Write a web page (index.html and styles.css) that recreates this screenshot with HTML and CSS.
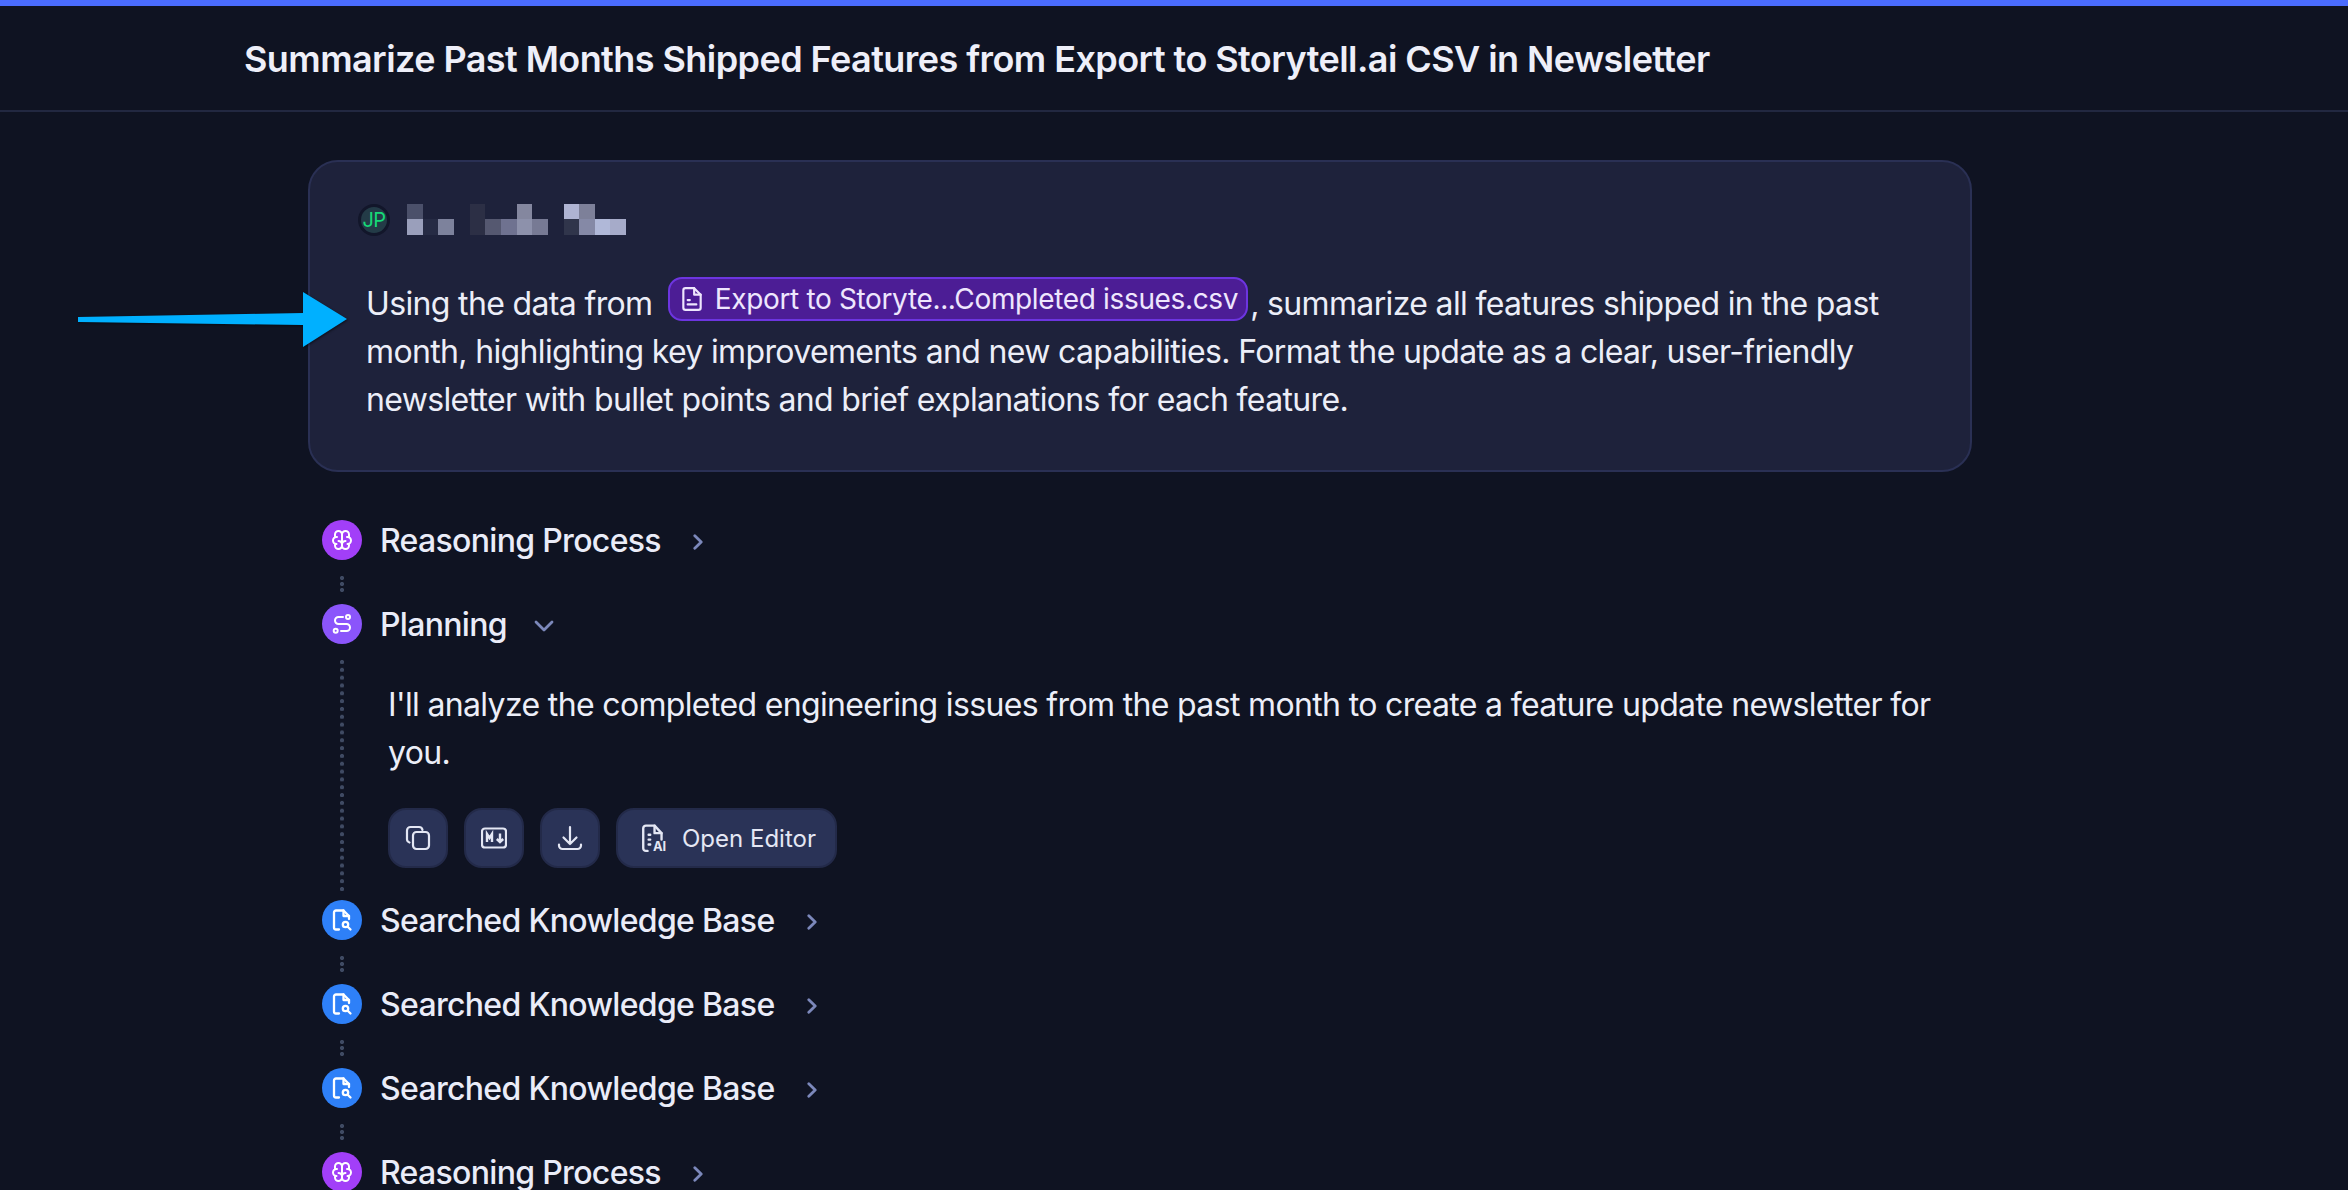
FILE: index.html
```html
<!DOCTYPE html>
<html lang="en">
<head>
<meta charset="utf-8">
<title>Summarize Past Months Shipped Features</title>
<link rel="stylesheet" href="styles.css">
</head>
<body>
<svg width="0" height="0" class="defs">
  <symbol id="i-brain" viewBox="0 0 24 24"><path d="M15.500 13a3.500 3.500 0 0 0-3.500 3.500v1a3.500 3.500 0 0 0 7 0v-1.800M8.500 13a3.500 3.500 0 0 1 3.500 3.500v1a3.500 3.500 0 0 1-7 0v-1.800M17.500 16a3.500 3.500 0 0 0 0-7H17M19 9.300V6.500a3.500 3.500 0 0 0-7 0M6.500 16a3.500 3.500 0 0 1 0-7H7M5 9.300V6.500a3.500 3.500 0 0 1 7 0v10"/></symbol>
  <symbol id="i-route" viewBox="0 0 24 24"><circle cx="5.700" cy="18.700" r="2"/><path d="M13 5H8.500a3.500 3.500 0 0 0 0 7h8a3.500 3.500 0 0 1 0 7H11"/><circle cx="18" cy="5" r="2"/></symbol>
  <symbol id="i-search" viewBox="0 0 24 24"><path d="M9 21.500H6a2 2 0 0 1-2-2V4.500a2 2 0 0 1 2-2h7.500l5.500 5.500v3"/><path d="M13.500 2.500V8H19"/><circle cx="15.500" cy="16.500" r="2.700"/><path d="m17.700 18.700 2.800 2.800"/></symbol>
  <symbol id="i-chev-r" viewBox="0 0 10 16"><path d="m1.800 1.800 6.400 6.200-6.400 6.200"/></symbol>
</svg>

<header class="topbar">
  <h1 class="title">Summarize Past Months Shipped Features from Export to Storytell.ai CSV in Newsletter</h1>
</header>

<main class="thread">
  <section class="prompt">
    <div class="author">
      <span class="avatar">JP</span>
      <svg class="blurname" width="226" height="31" viewBox="0 0 226 31">
        <rect x="0" y="0" width="16" height="15" fill="#4b506a"/><rect x="0" y="15" width="16" height="16" fill="#9a9fbb"/>
        <rect x="16" y="15" width="15" height="16" fill="#262b44"/>
        <rect x="31" y="15" width="16" height="16" fill="#7d829c"/>
        <rect x="63" y="0" width="15" height="31" fill="#2c2f45"/>
        <rect x="78" y="15" width="16" height="16" fill="#555870"/>
        <rect x="94" y="15" width="16" height="16" fill="#6f7290"/>
        <rect x="110" y="0" width="15" height="15" fill="#84879f"/><rect x="110" y="15" width="15" height="16" fill="#8d91ab"/>
        <rect x="125" y="15" width="16" height="16" fill="#777a94"/>
        <rect x="157" y="0" width="15" height="15" fill="#afb4d3"/><rect x="157" y="15" width="15" height="16" fill="#30354b"/>
        <rect x="172" y="0" width="16" height="15" fill="#7d8099"/><rect x="172" y="15" width="16" height="16" fill="#8589a6"/>
        <rect x="188" y="15" width="15" height="16" fill="#b0b8d8"/>
        <rect x="203" y="15" width="16" height="16" fill="#a6abc9"/>
      </svg>
    </div>
    <p class="prompt-text">Using the data from <span class="pill"><svg class="pill-icon" viewBox="0 0 24 24"><path d="M14 2H6a2 2 0 0 0-2 2v16a2 2 0 0 0 2 2h12a2 2 0 0 0 2-2V8z"/><path d="M14 2v6h6M8 13h2M8 17h8"/></svg>Export to Storyte...Completed issues.csv</span>, summarize all features shipped in the past month, highlighting key improvements and new capabilities. Format the update as a clear, user-friendly newsletter with bullet points and brief explanations for each feature.</p>
  </section>

  <section class="steps">
    <div class="step">
      <span class="badge badge-brain"><svg class="badge-icon"><use href="#i-brain"/></svg></span>
      <span class="step-label">Reasoning Process</span>
      <svg class="chev"><use href="#i-chev-r"/></svg>
    </div>
    <div class="link"></div>
    <div class="step">
      <span class="badge badge-plan"><svg class="badge-icon"><use href="#i-route"/></svg></span>
      <span class="step-label">Planning</span>
      <svg class="chev-down" viewBox="0 0 20 12"><path d="m2 2 8 8 8-8"/></svg>
    </div>
    <div class="step-body">
      <div class="rail"></div>
      <div class="step-content">
        <p class="answer">I'll analyze the completed engineering issues from the past month to create a feature update newsletter for you.</p>
        <div class="actions">
          <button class="action action-square"><svg class="action-icon" viewBox="0 0 26 26"><rect x="8" y="7" width="16" height="17" rx="3.500"/><path d="M4.500 17.500A3.500 3.500 0 0 1 2 14.500V5.500A3.500 3.500 0 0 1 5.500 2H14a3.500 3.500 0 0 1 3.500 3"/></svg></button>
          <button class="action action-square"><svg class="action-icon" viewBox="0 0 26 26"><rect x="1" y="3.500" width="24" height="19" rx="3"/><path class="md-glyph" d="M6 17V9l2.500 4L11 9v8M19 8.500V17M15.800 14l3.200 3 3.200-3"/></svg></button>
          <button class="action action-square"><svg class="action-icon" viewBox="0 0 26 26"><path d="M13 2v17M6.500 12.500 13 19l6.500-6.500M2 19.500v1A3.500 3.500 0 0 0 5.500 24h15a3.500 3.500 0 0 0 3.500-3.500v-1"/></svg></button>
          <button class="action action-wide"><svg class="action-icon action-icon-ai" viewBox="0 0 26 26"><path d="M7 25H5.500A2.500 2.500 0 0 1 3 22.500V4A2.500 2.500 0 0 1 5.500 1.500h8l6.500 7v6"/><path d="M13.500 1.500V8.500H20M8 10h1.500M8 14.500h1.500M8 19h1.500"/><text x="12" y="25.500" class="ai-mark">AI</text></svg>Open Editor</button>
        </div>
      </div>
    </div>
    <div class="step">
      <span class="badge badge-search"><svg class="badge-icon badge-icon-search"><use href="#i-search"/></svg></span>
      <span class="step-label">Searched Knowledge Base</span>
      <svg class="chev"><use href="#i-chev-r"/></svg>
    </div>
    <div class="link"></div>
    <div class="step">
      <span class="badge badge-search"><svg class="badge-icon badge-icon-search"><use href="#i-search"/></svg></span>
      <span class="step-label">Searched Knowledge Base</span>
      <svg class="chev"><use href="#i-chev-r"/></svg>
    </div>
    <div class="link"></div>
    <div class="step">
      <span class="badge badge-search"><svg class="badge-icon badge-icon-search"><use href="#i-search"/></svg></span>
      <span class="step-label">Searched Knowledge Base</span>
      <svg class="chev"><use href="#i-chev-r"/></svg>
    </div>
    <div class="link"></div>
    <div class="step">
      <span class="badge badge-brain"><svg class="badge-icon"><use href="#i-brain"/></svg></span>
      <span class="step-label">Reasoning Process</span>
      <svg class="chev"><use href="#i-chev-r"/></svg>
    </div>
  </section>
</main>

<svg class="arrow" width="275" height="66" viewBox="0 0 275 66">
  <path d="M0 31 225 27V6l44 27-44 28V39L0 36z" />
</svg>
</body>
</html>
```

FILE: styles.css
```css
* { box-sizing: border-box; }
html, body { height: 100%; }
body {
  margin: 0;
  height: 1190px;
  overflow: hidden;
  position: relative;
  background: #0f1322;
  color: #e9eaf6;
  font-family: Inter, "Liberation Sans", sans-serif;
  border-top: 6px solid #4a6cff;
}
.defs { display: block; height: 0; }
.topbar {
  height: 106px;
  padding-left: 244px;
  display: flex;
  align-items: center;
  border-bottom: 2px solid #222841;
}
.title {
  margin: 1px 0 0;
  font-size: 36px;
  font-weight: 600;
  line-height: 44px;
  letter-spacing: -0.57px;
  color: #eeeff9;
}
.thread { padding: 48px 0 0 308px; width: 1972px; }
.prompt {
  height: 312px;
  padding: 42px 56px 0 56px;
  border: 2px solid #2a3054;
  border-radius: 30px;
  background: #1e223b;
}
.author { display: flex; align-items: flex-start; gap: 17px; height: 32px; margin-left: -8px; }
.avatar {
  width: 32px;
  height: 32px;
  border-radius: 50%;
  border: 3px solid #12162a;
  background: #233b47;
  color: #16d977;
  font-size: 20px;
  font-weight: 400;
  line-height: 26px;
  text-align: center;
  letter-spacing: -0.5px;
}
.blurname { display: block; }
.prompt-text { margin: 41px 0 0; font-size: 32px; line-height: 48px; letter-spacing: -0.65px; color: #eceef8; }
.pill {
  display: inline-flex;
  align-items: center;
  gap: 10px;
  height: 44px;
  margin: 0 2px 0 7px;
  padding: 0 8px 0 9px;
  vertical-align: 3px;
  line-height: 40px;
  font-size: 28px;
  letter-spacing: -0.35px;
  border: 2px solid #6d35e0;
  border-radius: 14px;
  background: #4c1d95;
  color: #eee6fd;
}
.pill-icon {
  width: 26px;
  height: 26px;
  fill: none;
  stroke: #eee6fd;
  stroke-width: 2;
  stroke-linecap: round;
  stroke-linejoin: round;
}
.steps { padding: 48px 0 0 14px; }
.step { display: flex; align-items: center; height: 40px; }
.badge {
  flex: none;
  width: 40px;
  height: 40px;
  border-radius: 50%;
  display: flex;
  align-items: center;
  justify-content: center;
}
.badge-brain { background: #a23ff8; }
.badge-plan { background: #8b55fb; }
.badge-search { background: #2e80f8; }
.badge-icon {
  width: 24px;
  height: 24px;
  fill: none;
  stroke: #fff;
  stroke-width: 2;
  stroke-linecap: round;
  stroke-linejoin: round;
}
.badge-icon-search { stroke-width: 2.3; }
.step-label {
  margin: 2px 0 0 18px;
  font-size: 32px;
  font-weight: 500;
  line-height: 44px;
  letter-spacing: -0.68px;
  color: #eaecf8;
}
.chev, .chev-down {
  fill: none;
  stroke: #7c88bb;
  stroke-width: 2.8;
  stroke-linecap: round;
  stroke-linejoin: round;
}
.chev { width: 10px; height: 16px; margin: 3px 0 0 32px; }
.chev-down { width: 20px; height: 12px; margin: 3px 0 0 27px; }
.link {
  width: 4px;
  height: 18px;
  margin: 16px 0 10px 18px;
  background: radial-gradient(circle at 2px 2px, #3f4a63 2px, transparent 2.2px) repeat-y;
  background-size: 4px 6px;
}
.step-body { display: flex; height: 256px; }
.rail {
  flex: none;
  width: 4px;
  height: 231px;
  margin: 16px 0 0 18px;
  background: radial-gradient(circle at 2px 2px, #3f4a63 2px, transparent 2.2px) repeat-y;
  background-size: 4px 7.83px;
}
.step-content { margin-left: 44px; padding-top: 37px; width: 1580px; }
.answer { margin: 0; font-size: 32px; line-height: 48px; letter-spacing: -0.65px; color: #eceef8; }
.actions { display: flex; gap: 16px; margin-top: 31px; }
.action {
  height: 60px;
  display: flex;
  align-items: center;
  justify-content: center;
  padding: 0;
  border: 2px solid #232a49;
  border-radius: 18px;
  background: #2a3357;
  color: #e4e7f4;
  font-family: inherit;
  font-size: 24px;
}
.action-square { width: 60px; }
.action-wide { width: 221px; gap: 14px; padding-left: 3px; }
.action-icon {
  width: 26px;
  height: 26px;
  fill: none;
  stroke: #e4e7f4;
  stroke-width: 2.2;
  stroke-linecap: round;
  stroke-linejoin: round;
}
.md-glyph { stroke-width: 2.4; stroke-linecap: butt; stroke-linejoin: miter; }
.action-icon-ai { width: 28px; height: 28px; overflow: visible; }
.ai-mark { font-size: 12px; font-weight: 700; fill: #e4e7f4; stroke: none; font-family: Inter, sans-serif; }
.arrow {
  position: absolute;
  left: 78px;
  top: 280px;
  fill: #00b0ff;
  filter: drop-shadow(1px 1px 1px rgba(0, 0, 0, .5));
}
```
